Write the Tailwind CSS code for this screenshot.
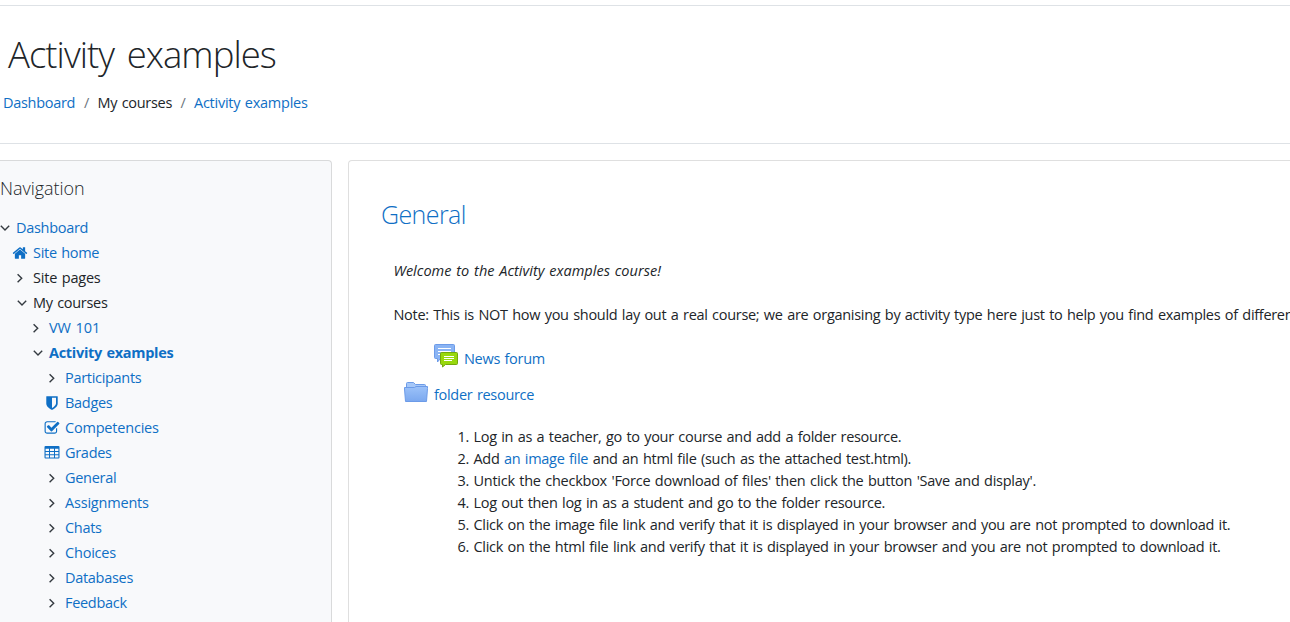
<!DOCTYPE html>
<html lang="en">
<head>
    <meta charset="UTF-8">
    <meta name="viewport" content="width=device-width, initial-scale=1.0">
    <title>Activity examples</title>
    <script src="https://cdn.jsdelivr.net/npm/@tailwindcss/browser@4"></script>
</head>
<body class="flex flex-col bg-white h-[622px] overflow-hidden font-['Open_Sans','Noto_Sans',sans-serif] text-[14.5px] leading-[22px] tracking-[-0.3px] [word-spacing:1.03px] text-[#212529]">
    <!-- icons -->
    <svg class="hidden">
        <symbol id="right" viewBox="0 0 16 16"><path d="M5.6 4.2l4.1 4-4.1 4" fill="none" stroke="#343a40" stroke-width="1.4"/></symbol>
        <symbol id="down" viewBox="0 0 16 16"><path d="M3.8 5.8l4.2 4.1 4.2-4.1" fill="none" stroke="#343a40" stroke-width="1.4"/></symbol>
        <symbol id="home" viewBox="0 0 1792 1792"><path d="M1472 992v480q0 26-19 45t-45 19h-384v-384h-256v384h-384q-26 0-45-19t-19-45v-480q0-1 .5-3t.5-3l575-474 575 474q1 2 1 6zm223-69l-62 74q-8 9-21 11h-3q-13 0-21-7l-692-577-692 577q-12 8-24 7-13-2-21-11l-62-74q-8-10-7-23.5t11-21.5l719-599q32-26 76-26t76 26l244 204v-195q0-14 9-23t23-9h192q14 0 23 9t9 23v408l219 182q10 8 11 21.5t-7 23.5z"/></symbol>
        <symbol id="shield" viewBox="0 0 1792 1792"><path d="M1344 960v-640h-448v1137q119-63 213-137 235-184 235-360zm192-768v768q0 86-33.5 170.5t-83 150-118 127.5-126.5 103-121 77.5-89.5 49.5-42.5 20q-12 6-26 6t-26-6q-16-7-42.5-20t-89.5-49.5-121-77.5-126.5-103-118-127.5-83-150-33.5-170.5v-768q0-26 19-45t45-19h1152q26 0 45 19t19 45z"/></symbol>
        <symbol id="check" viewBox="0 0 1792 1792"><path d="M1472 930v318q0 119-84.5 203.5t-203.5 84.5h-832q-119 0-203.5-84.5t-84.5-203.5v-832q0-119 84.5-203.5t203.5-84.5h832q63 0 117 25 15 7 18 23 3 17-9 29l-49 49q-10 10-23 10-3 0-9-2-23-6-45-6h-832q-66 0-113 47t-47 113v832q0 66 47 113t113 47h832q66 0 113-47t47-113v-254q0-13 9-22l64-64q10-10 23-10 6 0 12 3 20 8 20 29zm231-489l-814 814q-24 24-57 24t-57-24l-430-430q-24-24-24-57t24-57l110-110q24-24 57-24t57 24l263 263 647-647q24-24 57-24t57 24l110 110q24 24 24 57t-24 57z"/></symbol>
        <symbol id="table" viewBox="0 0 16 16"><path fill-rule="evenodd" d="M1.5 1h13q1 0 1 1v10.500q0 1-1 1h-13q-1 0-1-1V2q0-1 1-1zM1.600 3.800v2.300h3.400V3.800zM6 3.800v2.300h4V3.800zM11 3.800v2.300h3.400V3.800zM1.600 7v2.200h3.400V7zM6 7v2.200h4V7zM11 7v2.200h3.400V7zM1.600 10.200V12.500h3.400v-2.300zM6 10.200V12.500h4v-2.300zM11 10.200V12.500h3.400v-2.300z"/></symbol>
    </svg>

    <header class="mt-[5px] h-[139px] shrink-0 border-y border-[#dee2e6] pt-[26px]">
        <h1 class="pl-2 font-light text-[36.5px] leading-[44px] tracking-[-0.95px] [word-spacing:4px]">Activity examples</h1>
        <nav class="mt-4 flex pl-[3px]">
            <a href="#" class="w-[81px] text-[#0f6fc5]">Dashboard</a>
            <span class="w-[13.500px] text-[#6c757d]">/</span>
            <span class="w-[83px]">My courses</span>
            <span class="w-[13.500px] text-[#6c757d]">/</span>
            <a href="#" class="text-[#0f6fc5] tracking-[-0.25px]">Activity examples</a>
        </nav>
    </header>

    <div class="mt-4 flex min-h-0 grow gap-4">
        <aside class="w-[332px] shrink-0 overflow-hidden rounded-tr border-t border-r border-[#d9dadb] bg-[#f8f9fb] pt-4">
            <h5 class="font-light text-[18px] leading-[22px] tracking-[-0.05px]">Navigation</h5>
            <ul class="mt-4 leading-[25px] text-[#0f6fc5] fill-[#0f6fc5]">
                <li class="flex h-[25px] items-center"><svg class="-ml-[3px] mr-[3px] size-4"><use href="#down"/></svg><a href="#">Dashboard</a></li>
                <li class="flex h-[25px] items-center pl-3"><svg class="mr-[5px] size-4"><use href="#home"/></svg><a href="#">Site home</a></li>
                <li class="flex h-[25px] items-center pl-3 text-[#212529]"><svg class="mr-[5px] size-4"><use href="#right"/></svg><span class="tracking-[-0.2px]">Site pages</span></li>
                <li class="flex h-[25px] items-center pl-[14px] text-[#212529]"><svg class="mr-[3px] size-4"><use href="#down"/></svg>My courses</li>
                <li class="flex h-[25px] items-center pl-7"><svg class="mr-[5px] size-4"><use href="#right"/></svg><a href="#" class="tracking-[-0.1px]">VW 101</a></li>
                <li class="flex h-[25px] items-center pl-[30px] font-bold"><svg class="mr-[3px] size-4"><use href="#down"/></svg><a href="#">Activity examples</a></li>
                <li class="flex h-[25px] items-center pl-11"><svg class="mr-[5px] size-4"><use href="#right"/></svg><a href="#">Participants</a></li>
                <li class="flex h-[25px] items-center pl-11"><svg class="mr-[5px] size-4"><use href="#shield"/></svg><a href="#">Badges</a></li>
                <li class="flex h-[25px] items-center pl-11"><svg class="mr-[5px] size-4"><use href="#check"/></svg><a href="#" class="tracking-[-0.2px]">Competencies</a></li>
                <li class="flex h-[25px] items-center pl-11"><svg class="mr-[5px] size-4"><use href="#table"/></svg><a href="#">Grades</a></li>
                <li class="flex h-[25px] items-center pl-11"><svg class="mr-[5px] size-4"><use href="#right"/></svg><a href="#">General</a></li>
                <li class="flex h-[25px] items-center pl-11"><svg class="mr-[5px] size-4"><use href="#right"/></svg><a href="#" class="tracking-[-0.2px]">Assignments</a></li>
                <li class="flex h-[25px] items-center pl-11"><svg class="mr-[5px] size-4"><use href="#right"/></svg><a href="#">Chats</a></li>
                <li class="flex h-[25px] items-center pl-11"><svg class="mr-[5px] size-4"><use href="#right"/></svg><a href="#" class="tracking-[-0.2px]">Choices</a></li>
                <li class="flex h-[25px] items-center pl-11"><svg class="mr-[5px] size-4"><use href="#right"/></svg><a href="#">Databases</a></li>
                <li class="flex h-[25px] items-center pl-11"><svg class="mr-[5px] size-4"><use href="#right"/></svg><a href="#">Feedback</a></li>
            </ul>
        </aside>

        <main class="min-w-0 grow overflow-hidden rounded-tl border-t border-l border-[#dfdfdf] pt-[37px] pl-8 whitespace-nowrap">
            <h3 class="font-light text-[25px] leading-[32px] tracking-[-0.6px] text-[#0f6fc5]">General</h3>
            <p class="mt-[30px] pl-[12.500px] italic tracking-[0.02px]">Welcome to the Activity examples course!</p>
            <p class="mt-[22px] pl-[12.500px]">Note: This is NOT how you should lay out a real course; we are organising by activity type here just to help you find examples of differen</p>

            <div class="mt-[18px] flex pl-[53px]">
                <svg class="mr-[6px] h-6 w-6" viewBox="0 0 24 24">
                    <path d="M1.500.5h18q1 0 1 1v12q0 1-1 1H6.500l-3 3.500v-3.500h-2q-1 0-1-1v-12q0-1 1-1z" fill="#8ab4f4" stroke="#6c9be8"/>
                    <path d="M4 4.500h13M4 7.500h13M4 10.500h5" stroke="#fff"/>
                    <path d="M7.500 8.500h15q1 0 1 1v10q0 1-1 1h-11L8.500 23v-2.500h-1q-1 0-1-1v-10q0-1 1-1z" fill="#98d80d" stroke="#73a80d"/>
                    <path d="M10 12.500h10M10 14.500h10M10 16.500h8" stroke="#fff"/>
                </svg>
                <a href="#" class="pt-1 text-[#0f6fc5]">News forum</a>
            </div>
            <div class="mt-[10px] flex pl-[23px]">
                <svg class="mt-px mr-[6px] h-6 w-6" viewBox="0 0 24 24">
                    <defs><linearGradient id="blue" x2="0" y2="1"><stop stop-color="#9cc2f9"/><stop offset="1" stop-color="#7ba8ef"/></linearGradient></defs>
                    <path d="M2.500 8V2.500q0-1 1-1h6l2 2h9q1 0 1 1V8" fill="#a5c7f8" stroke="#6c9be8"/>
                    <path d="M.5 6.500h10l1.500-1h11.500v2L22.500 20.500h-21L.5 8z" fill="url(#blue)" stroke="#6c9be8"/>
                </svg>
                <a href="#" class="pt-1 text-[#0f6fc5]">folder resource</a>
            </div>

            <ol class="mt-5 list-decimal pl-[92.500px]">
                <li>Log in as a teacher, go to your course and add a folder resource.</li>
                <li>Add <a href="#" class="text-[#0f6fc5]">an image file</a> and an html file (such as the attached test.html).</li>
                <li class="tracking-[-0.26px]">Untick the checkbox 'Force download of files' then click the button 'Save and display'.</li>
                <li>Log out then log in as a student and go to the folder resource.</li>
                <li>Click on the image file link and verify that it is displayed in your browser and you are not prompted to download it.</li>
                <li>Click on the html file link and verify that it is displayed in your browser and you are not prompted to download it.</li>
            </ol>
        </main>
    </div>
</body>
</html>
